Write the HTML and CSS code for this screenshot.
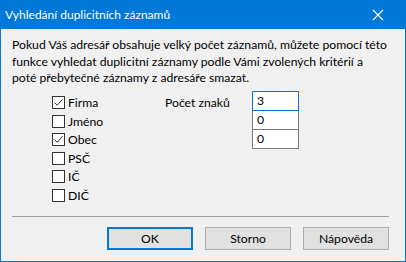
FILE: index.html
```html
<!DOCTYPE html>
<html lang="cs">
<head>
    <meta charset="UTF-8">
    <title>Vyhledání duplicitních záznamů</title>
    <link rel="stylesheet" href="styles.css">
</head>
<body>
    <div class="window">
        <div class="titlebar">
            <span class="title">Vyhledání duplicitních záznamů</span>
            <svg class="close" width="12" height="12" viewBox="0 0 12 12">
                <path d="M1 1 L11 11 M11 1 L1 11" stroke="#fff" stroke-width="1.1" fill="none"/>
            </svg>
        </div>
        <div class="content">
            <p class="intro">Pokud Váš adresář obsahuje velký počet záznamů, můžete pomocí této<br>funkce vyhledat duplicitní záznamy podle Vámi zvolených kritérií a<br>poté přebytečné záznamy z adresáře smazat.</p>
            <div class="options">
                <ul class="checks">
                    <li><span class="box checked"><svg width="11" height="11" viewBox="0 0 11 11"><path d="M1.5 5.5 L4.2 8.3 L9.6 2.2" stroke="#333" stroke-width="1" fill="none"/></svg></span>Firma</li>
                    <li><span class="box"></span>Jméno</li>
                    <li><span class="box checked"><svg width="11" height="11" viewBox="0 0 11 11"><path d="M1.5 5.5 L4.2 8.3 L9.6 2.2" stroke="#333" stroke-width="1" fill="none"/></svg></span>Obec</li>
                    <li><span class="box"></span>PSČ</li>
                    <li><span class="box"></span>IČ</li>
                    <li><span class="box"></span>DIČ</li>
                </ul>
                <div class="count">
                    <span class="count-label">Počet znaků</span>
                    <div class="fields">
                        <div class="field focused">3</div>
                        <div class="field">0</div>
                        <div class="field">0</div>
                    </div>
                </div>
            </div>
            <div class="separator"></div>
            <div class="buttons">
                <button class="btn default">OK</button>
                <button class="btn">Storno</button>
                <button class="btn">Nápověda</button>
            </div>
        </div>
    </div>
</body>
</html>
```

FILE: styles.css
```css
html, body {
    margin: 0;
    padding: 0;
}
body {
    font-family: Lato, "Noto Sans", sans-serif;
    font-size: 12.2px;
    color: #000;
    background: #f0f0f0;
}
.window {
    width: 406px;
    height: 262px;
    box-sizing: border-box;
    border: 1px solid #0078d7;
    background: #f0f0f0;
    display: flex;
    flex-direction: column;
}
.titlebar {
    height: 28px;
    background: #0078d7;
    color: #fff;
    display: flex;
    align-items: center;
    justify-content: space-between;
    padding: 0 21px 0 4px;
}
.title {
    font-size: 12px;
    line-height: 16px;
}
.close {
    display: block;
}
.content {
    flex: 1;
    padding: 8px 16px 0 11px;
}
.intro {
    margin: 0;
    line-height: 16.5px;
    white-space: nowrap;
}
.options {
    display: flex;
    margin: 7px 0 0 40px;
}
.checks {
    list-style: none;
    margin: 0;
    padding: 0;
    width: 113px;
}
.checks li {
    height: 18.5px;
    display: flex;
    align-items: center;
}
.box {
    width: 13px;
    height: 13px;
    box-sizing: border-box;
    border: 1px solid #333;
    background: #fff;
    margin-right: 3px;
    display: flex;
    align-items: center;
    justify-content: center;
}
.box svg {
    display: block;
}
.count {
    display: flex;
    align-items: flex-start;
}
.count-label {
    width: 87px;
    line-height: 18px;
}
.fields {
    margin-top: -3px;
    width: 47px;
}
.field {
    height: 20px;
    box-sizing: border-box;
    border: 1px solid #7a7a7a;
    background: #fff;
    margin-top: -1px;
    padding-left: 4px;
    line-height: 18px;
    position: relative;
}
.field:first-child {
    margin-top: 0;
}
.field.focused {
    border-color: #0078d7;
    z-index: 1;
}
.separator {
    height: 1px;
    background: #a0a0a0;
    margin-top: 11px;
}
.buttons {
    display: flex;
    justify-content: flex-end;
    gap: 12px;
    margin-top: 10px;
}
.btn {
    width: 86px;
    height: 23px;
    box-sizing: border-box;
    border: 1px solid #adadad;
    background: #e1e1e1;
    font-family: inherit;
    font-size: 12.2px;
    color: #000;
    padding: 0;
}
.btn.default {
    border: 2px solid #0078d7;
}
```
